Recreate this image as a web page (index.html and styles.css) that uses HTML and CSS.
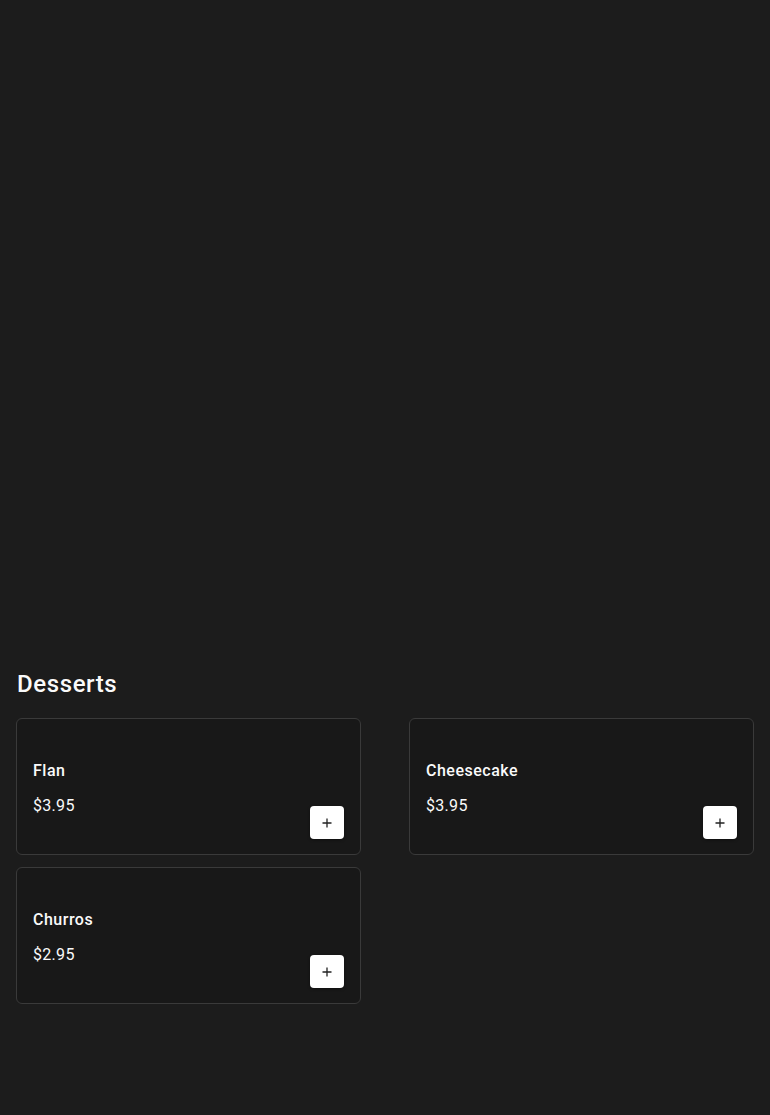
FILE: index.html
```html
<!DOCTYPE html>
<html lang="en">
<head>
    <meta charset="UTF-8">
    <meta name="viewport" content="width=device-width, initial-scale=1.0">
    <title>Menu - Desserts</title>
    <link rel="stylesheet" href="styles.css">
</head>
<body>
    <div class="hero"></div>
    <section class="category">
        <h2>Desserts</h2>
        <div class="items">
            <div class="item">
                <div class="info">
                    <h3>Flan</h3>
                    <p class="price">$3.95</p>
                </div>
                <button class="add" aria-label="Add Flan">
                    <svg width="10" height="10" viewBox="0 0 10 10"><path d="M5 0.5v9M0.5 5h9" stroke="#222" stroke-width="1.3"/></svg>
                </button>
            </div>
            <div class="item">
                <div class="info">
                    <h3>Cheesecake</h3>
                    <p class="price">$3.95</p>
                </div>
                <button class="add" aria-label="Add Cheesecake">
                    <svg width="10" height="10" viewBox="0 0 10 10"><path d="M5 0.5v9M0.5 5h9" stroke="#222" stroke-width="1.3"/></svg>
                </button>
            </div>
            <div class="item">
                <div class="info">
                    <h3>Churros</h3>
                    <p class="price">$2.95</p>
                </div>
                <button class="add" aria-label="Add Churros">
                    <svg width="10" height="10" viewBox="0 0 10 10"><path d="M5 0.5v9M0.5 5h9" stroke="#222" stroke-width="1.3"/></svg>
                </button>
            </div>
        </div>
    </section>
</body>
</html>
```

FILE: styles.css
```css
/* Page */
body { margin: 0; background: #1c1c1c; color: #fafafa; font-family: Roboto, "Liberation Sans", sans-serif; }
.hero { height: 668px; }

/* Category */
.category { padding: 0 16px 100px; }
.category h2 { margin: 0 0 18px 1px; font-size: 24px; line-height: 32px; font-weight: 500; letter-spacing: 0.6px; }
.items { display: grid; grid-template-columns: 1fr 1fr; column-gap: 48px; row-gap: 12px; }

/* Item card */
.item { box-sizing: border-box; height: 137px; display: flex; justify-content: space-between; align-items: flex-end; padding: 16px 16px 15px; background: #181818; border: 1px solid #3a3a3a; border-radius: 6px; }
.info { align-self: flex-start; padding-top: 24px; }
.info h3 { margin: 0; font-size: 16px; line-height: 24px; font-weight: 500; letter-spacing: 0.5px; }
.price { margin: 11px 0 0; font-size: 16px; line-height: 24px; letter-spacing: 0.3px; }
.add { width: 34px; height: 33px; padding: 0; display: flex; align-items: center; justify-content: center; background: #fff; border: none; border-radius: 4px; box-shadow: 0 1px 3px rgba(0, 0, 0, 0.4); cursor: pointer; }
```
